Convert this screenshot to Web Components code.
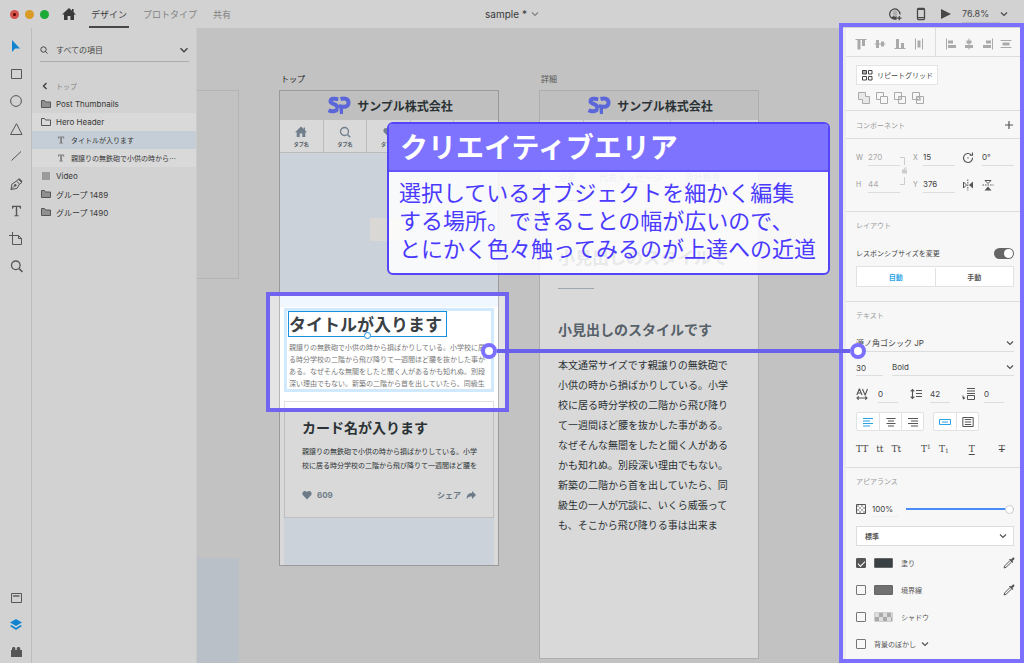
<!DOCTYPE html>
<html lang="ja">
<head>
<meta charset="utf-8">
<meta name="viewport" content="width=device-width, initial-scale=1">
<title>sample</title>
<style>
  body { margin: 0; font-family: Inter, "Noto Sans CJK JP", sans-serif; font-size: 8px; color: #444; background: #e4e4e4; }
</style>
</head>
<body>
<design-app></design-app>
<script>
const BASE = `*{box-sizing:border-box} button,input,select{font:inherit;color:inherit;background:none;border:0;padding:0;margin:0;border-radius:0;outline:0} button{display:inline-flex;align-items:center;justify-content:center} select{appearance:none} p,h2,h3,ul{margin:0;padding:0;font-weight:inherit;list-style:none}`;

function define(name, css, html, setup) {
  const t = document.createElement('template');
  t.innerHTML = `<style>${BASE}${css}</style>${html}`;
  customElements.define(name, class extends HTMLElement {
    constructor() {
      super();
      this.attachShadow({ mode: 'open' }).append(t.content.cloneNode(true));
    }
    connectedCallback() { if (setup) setup(this, this.shadowRoot); }
  });
}

/* Icon set: width, height, markup. Strokes and fills follow the text colour. */
const S = 'fill="none" stroke="currentColor"';
const F = 'fill="currentColor"';
const ICONS = {
  home: [14, 12, `<path ${F} d="M7 0 0 6.6h2V12h3.6V8h2.8v4H12V6.6h2L11.6 4.3V1H10v1.8z"/>`],
  cursor: [16, 16, `<path ${F} d="M4 2v12l3.2-3.6H12z"/>`],
  rect: [16, 16, `<path ${S} d="M3.500 3.500h10v9h-10z"/>`],
  circle: [16, 16, `<circle ${S} cx="8" cy="8" r="5.400"/>`],
  triangle: [16, 16, `<path ${S} d="M8.500 2.700 14 13.500H2.500z"/>`],
  line: [16, 16, `<path ${S} d="m3.500 12.500 9.500-9"/>`],
  pen: [16, 16, `<path ${S} d="M3 13.500 4 8l4.500-2.800L11.500 8 9 12.400zm0 0 4-4M8.500 5.200l1.800-2L13.800 6.500l-2.300 1.700"/><path ${F} d="m10 3 1.300-.7 3.200 3-1 1.200z"/><circle ${F} cx="7.300" cy="9.200" r="1.200"/>`],
  text: [16, 16, `<path ${F} d="M4 2.800h9v3h-.9c-.2-1.400-.6-1.900-1.800-1.900H9.200v7.500c0 .8.400 1 1.600 1.100v.7H6.200v-.7c1.200-.1 1.600-.3 1.600-1.100V3.900H6.700c-1.200 0-1.600.5-1.800 1.900H4z"/>`],
  artboard: [16, 16, `<path ${S} d="M4.500 1v12.500h9V7.500l-3-3H1M10.500 4.500v3h3"/>`],
  search: [16, 16, `<circle ${S} stroke-width="1.300" cx="7.800" cy="7.300" r="4.300"/><path ${S} stroke-width="1.600" d="m11 10.500 3.400 3.400"/>`],
  doc: [16, 16, `<path ${S} d="M3.500 3.500h10v9h-10z"/><path ${S} stroke-width="1.400" d="M5 6h6.500"/>`],
  layers: [16, 16, `<path ${F} d="m8 2 6 3.400-6 3.600-6-3.600zM3.500 8 8 10.800 12.500 8 14 9l-6 4-6-4z"/>`],
  plugin: [16, 16, `<path ${F} d="M3 6h1V4l1-1h1.500l.8 1v2h1.400V4l1-1h1.500l1 1v2H14v7H3z"/>`],
  user: [14, 14, `<path fill="none" stroke="currentColor" stroke-width="1.300" d="M3.600 11.300A5.200 5.200 0 1 1 12 7.500"/><path ${F} d="M4.300 12.200 2.800 10.800C4 10 5.300 9.700 5.600 9 5 8.300 4.600 7.400 4.600 6.200 4.600 4.400 5.500 3.300 7 3.300s2.400 1.100 2.400 2.900c0 1.200-.4 2.100-1 2.800l.3.600.3 2.700c-1.500.8-3.300.7-4.700-.1z" opacity=".25"/><path ${F} d="M3 10.800c.8-1 2-1.100 2.500-1.700l1.500.8 1.500-.8.200 3.300c-2 .7-4.200.200-5.700-1.600z"/><path ${S} stroke-width="1.200" d="M11.300 8.900v4.400M9.100 11.100h4.400"/>`],
  phone: [10, 14, `<rect ${S} stroke-width="1.300" x="1.500" y="1.500" width="7" height="11" rx="1"/><path ${S} d="M1.500 2.500h7M1.500 10.500h7"/>`],
  play: [12, 12, `<path ${F} d="m1 1 10 5-10 5z"/>`],
  chevron: [8, 6, `<path ${S} stroke-width="1.200" d="m1 1.500 3 3 3-3"/>`],
  chevronBold: [10, 8, `<path ${S} stroke-width="1.500" d="m1.500 2.300 3.500 3.400 3.500-3.400"/>`],
  back: [8, 8, `<path ${S} stroke-width="1.300" d="m5.500 1-3 3 3 3"/>`],
  folder: [10, 8, `<path fill="#aaa" stroke="#666" d="M.5 7.500v-7h3l1 1.500h5v5.500z"/>`],
  folderOpen: [10, 8, `<path fill="#fff" stroke="#666" d="M.5 7.500v-7h3l1 1.500h5v5.500z"/>`],
  layerText: [8, 8, `<path fill="#999" d="M1 .5h6.200v2.300h-.8L6 1.600H5v4.900l1 .2v.8H2.200v-.8l1-.2V1.600h-1L1.800 2.800H1z"/>`],
  layerVideo: [10, 8, `<path fill="#b5b5b5" d="M1 0h8v8H1z"/>`],
  alTop: [12, 12, `<path ${S} d="M.5 1.500h11"/><path ${F} d="M2.500 2h3v9.500h-3zM7 2h3v6H7z"/>`],
  alMid: [12, 12, `<path ${S} d="M.5 6h11"/><path ${F} d="M2 2h3v8H2zM7 3.500h3v5H7z"/>`],
  alBot: [12, 12, `<path ${S} d="M.5 10.500h11"/><path ${F} d="M2 1h3v9.500H2zM7 5h3v5.500H7z"/>`],
  disH: [12, 12, `<path ${S} d="M2.500.5v11M9.500.5v11"/><path ${F} d="M4.500 2.500h3v7h-3z"/>`],
  alLeft: [12, 12, `<path ${S} d="M1.500.5v11"/><path ${F} d="M3 2.500h5v3H3zM3 7h8v3H3z"/>`],
  alCen: [12, 12, `<path ${S} d="M6 .5v11"/><path ${F} d="M3.500 2.500h5v3h-5zM2 7h8v3H2z"/>`],
  alRight: [12, 12, `<path ${S} d="M10.500.5v11"/><path ${F} d="M4 2.500h5v3H4zM1 7h8v3H1z"/>`],
  disV: [12, 12, `<path ${S} d="M.5 2.500h11M.5 9.500h11"/><path ${F} d="M2.500 4.500h7v3h-7z"/>`],
  repeat: [12, 12, `<path fill="#aaa" d="M1 1h4.500v4H1z"/><path ${S} d="M1.500 1.500h4v3.500h-4zM7.500 1.500h3.500v3.500H7.500zM1.500 7.500h4V11h-4zM7.500 7.500H11V11H7.500z"/>`],
  boolAdd: [12, 12, `<path fill="#e8e8e8" stroke="currentColor" d="M.5.5h7v4h4v7h-7v-4h-4z"/>`],
  boolSub: [12, 12, `<path ${S} d="M4.500 7.500h-4v-7h7v4"/><path ${S} d="M4.500 4.500h7v7h-7z"/>`],
  boolInt: [12, 12, `<path fill="#ddd" d="M4.500 4.500h3v3h-3z"/><path ${S} d="M.5.5h7v7h-7zM4.500 4.500h7v7h-7z"/>`],
  boolExc: [12, 12, `<path ${S} d="M.5.5h7v7h-7zM4.500 4.500h7v7h-7z"/><path ${S} d="M5.500 5.500h3v3h-3z" opacity=".6"/>`],
  plus: [10, 10, `<path ${S} stroke-width="1.200" d="M5 1v8M1 5h8"/>`],
  link: [8, 28, `<path ${S} d="M0 .5h4.500V8M0 27.500h4.500V20"/><path ${F} d="M2 12.500h5v4H2z"/><path ${S} d="M4.500 12.500V11H6.500"/>`],
  rotate: [12, 12, `<path ${S} stroke-width="1.100" d="M9.200 2.800a4.500 4.500 0 1 0 1.300 3M7.800 3.200h2.700V.5"/><circle ${F} cx="6" cy="6" r=".7"/>`],
  flipH: [12, 12, `<path ${S} d="M1.500 3v6l3-3z"/><path ${F} d="M11 2.500v7L7 6z"/><path ${S} stroke-dasharray="1.500 1" d="M5.800.5v11"/>`],
  flipV: [12, 12, `<path ${S} d="M3 1.500h6L6 4.500z"/><path ${F} d="M2.500 11.500h7L6 7.500z"/><path ${S} stroke-dasharray="1.500 1" d="M.5 6h11"/>`],
  kern: [12, 12, `<path ${S} stroke-width="1.100" d="m.8 7 2.500-6h.3L6 7M1.700 5h3.500M6.500 1 9 7h.2l2.300-6M1 10h10M2.700 8.300 1 10l1.700 1.700M9.300 8.300 11 10l-1.700 1.700"/>`],
  leading: [12, 12, `<path ${S} stroke-width="1.100" d="M2.500 1.500v9M.7 3.300l1.800-1.800 1.800 1.800M.7 8.700l1.800 1.800 1.800-1.800"/><path ${S} d="M6 2.500h6M6 5.500h6M6 8.500h6"/>`],
  para: [14, 12, `<path ${S} d="M5 .5h8M5 3h8M5 5.500h8M5.500 7.500h7v4h-7zM1 7.500v3"/><path ${F} d="M1 8.500 3.500 10 1 11.800z"/>`],
  txL: [10, 10, `<path ${S} stroke-width="1.200" d="M0 1.500h10M0 4h7M0 6.500h10M0 9h7"/>`],
  txC: [10, 10, `<path ${S} stroke-width="1.200" d="M.5 1.500h9M2 4h6M.5 6.500h9M2 9h6"/>`],
  txR: [10, 10, `<path ${S} stroke-width="1.200" d="M0 1.500h10M3 4h7M0 6.500h10M3 9h7"/>`],
  point: [12, 10, `<path ${S} d="M.5 2.500h11v5H.5zM3 5h6"/>`],
  area: [12, 10, `<path ${S} d="M.8.500h10.400v9H.8zM2.800 2.500h6.400M2.800 5h6.400M2.800 7.500h6.400"/>`],
  opacity: [10, 10, `<path fill="#b5b5b5" d="M1 1h2v2H1zM5 1h2v2H5zM3 3h2v2H3zM7 3h2v2H7zM1 5h2v2H1zM5 5h2v2H5zM3 7h2v2H3zM7 7h2v2H7z"/><path ${S} d="M.5.500h9v9h-9z"/>`],
  dropper: [12, 12, `<path ${S} d="M7 3.500 1.800 8.800l-.8 2.200 2.200-.8L8.500 5"/><path ${F} d="M6 2.600 7 1.800l.9.800L9.500.9c1.200-1 2.600.4 1.600 1.600L9.400 4.100l.9 1-.9.900z"/>`],
  house: [12, 12, `<path ${F} d="M6 .5 0 6.300h1.700V11h3V7.500h2.600V11h3V6.300H12L10 4.300V1.500H8.700V3z"/>`],
  find: [12, 12, `<circle ${S} stroke-width="1.300" cx="5.500" cy="5.500" r="4"/><path ${S} stroke-width="1.500" d="m8.500 8.500 2.700 2.700"/>`],
  heart: [10, 10, `<path ${F} d="M5 9.500.8 5C-.9 2.800 2.500-.7 5 2 7.500-.7 10.900 2.800 9.200 5z"/>`],
  person: [10, 10, `<circle ${F} cx="5" cy="3" r="2.400"/><path ${F} d="M.8 9.500C.8 5 9.200 5 9.200 9.500z"/>`],
  share: [10, 10, `<path ${F} d="M6 1v2C2.500 3 .5 5 .8 9.200 2 7 3.500 6.500 6 6.600V9l4-4z"/>`],
  logo: [24, 20, `<g fill="none" stroke="#6b78ff" stroke-width="4"><path d="M11.500 3.500C8 2 3.500 2.400 3.500 5.600c0 2.600 7 2 7 6.100 0 3.600-5 4.500-9 2.600"/><path d="M13.500 3c4-1 8-.6 8 3.600 0 4-3.500 4.500-7.500 4v7.500"/></g><path stroke="#e0e0e0" d="m12.200 0-.6 8M12 12l.5 8"/>`]
};
define('ui-icon', ':host{display:inline-flex;flex:none} svg{display:block}', '<span></span>', (el, root) => {
  const icon = ICONS[el.getAttribute('name')];
  if (!icon) return;
  const [w, h, body] = icon;
  root.querySelector('span').innerHTML = `<svg width="${w}" height="${h}" viewBox="0 0 ${w} ${h}" aria-hidden="true">${body}</svg>`;
});

define('title-bar', `
:host{display:grid;grid-template-columns:1fr auto 1fr;align-items:stretch;height:28px;background:#f7f7f7;font-size:9px}
div{display:flex;align-items:center}
.dots{gap:6px;padding:0 13px 0 10px}
.dots button{width:9px;height:9px;border-radius:50%}
.r{background:#f8615a}.y{background:#ffb72d}.g{background:#20c840}
.r::after{content:"";width:3px;height:3px;border-radius:50%;background:#600}
nav{display:flex;align-self:stretch;margin-left:13px;gap:12px}
nav a{display:flex;align-items:center;padding:0 2px;color:#999;text-decoration:none}
nav a.on{color:#444;box-shadow:inset 0 -2px #555}
h1{display:flex;align-items:center;gap:4px;margin:0;font-size:10px;font-weight:400}
h1 ui-icon{color:#999}
.right{justify-content:flex-end;gap:14px;padding-right:16px;color:#555}
.right label{display:flex;align-items:center;margin-left:-4px}
select{width:38px;border-bottom:1px solid #ddd;height:17px}`,
`<div><div class="dots"><button class="r" aria-label="閉じる"></button><button class="y" aria-label="最小化"></button><button class="g" aria-label="拡大"></button></div>
<button aria-label="ホーム"><ui-icon name="home"></ui-icon></button>
<nav><a class="on" href="#design">デザイン</a><a href="#prototype">プロトタイプ</a><a href="#share">共有</a></nav></div>
<h1>sample * <ui-icon name="chevron"></ui-icon></h1>
<div class="right"><button aria-label="招待"><ui-icon name="user"></ui-icon></button><button aria-label="デバイスプレビュー"><ui-icon name="phone"></ui-icon></button><button aria-label="プレビュー"><ui-icon name="play"></ui-icon></button>
<label><select aria-label="ズーム"><option>76.8%</option><option>100%</option></select><ui-icon name="chevron"></ui-icon></label></div>`);

define('tool-rail', `
:host{display:flex;flex-direction:column;justify-content:space-between;width:32px;padding:10px 7px 3px;background:#f7f7f7;border-right:1px solid #ddd;color:#666}
div{display:flex;flex-direction:column;gap:11px}
.tools{height:236px;gap:0;justify-content:space-between}
.on{color:#159cf5}`,
`<div class="tools" role="toolbar" aria-label="ツール">${[['cursor','選択'],['rect','長方形'],['circle','楕円'],['triangle','多角形'],['line','線'],['pen','ペン'],['text','テキスト'],['artboard','アートボード'],['search','ズーム']].map(([n,l],i)=>`<button aria-label="${l}" class="${i?'':'on'}"><ui-icon name="${n}"></ui-icon></button>`).join('')}</div>
<div><button aria-label="ライブラリ"><ui-icon name="doc"></ui-icon></button><button class="on" aria-label="レイヤー"><ui-icon name="layers"></ui-icon></button><button aria-label="プラグイン"><ui-icon name="plugin"></ui-icon></button></div>`);

define('layer-row', `
:host{display:flex;align-items:center;gap:5px;height:18px;padding:0 18px 0 9px;white-space:nowrap;color:#444}
:host([open]){background:#fff}
:host([child]){padding-left:25px;gap:6px;font-family:"Noto Sans CJK JP",sans-serif;font-size:7px;background:#fff}
:host([selected]){background:#e8f3fc}`,
`<ui-icon></ui-icon><slot></slot>`, (el, root) => {
  const old = root.querySelector('ui-icon');
  const icon = document.createElement('ui-icon');
  icon.setAttribute('name', el.getAttribute('icon'));
  old.replaceWith(icon);
});

define('layers-panel', `
:host{display:block;width:165px;background:#f7f7f7;border-right:1px solid #eee}
.filter{display:flex;align-items:center;gap:8px;height:24px;margin:10px 7px 14px 8px;border-bottom:1px solid #ccc;color:#555}
.filter select{flex:1;min-width:0;height:22px;font-size:8px}
.small{width:8px;height:8px}
.up{display:flex;gap:7px;height:19px;padding-left:9px;color:#999;font-size:7px}
.up ui-icon{color:#444}`,
`<label class="filter"><svg class="small" viewBox="0 0 8 8" aria-hidden="true"><circle cx="3.500" cy="3.500" r="2.700" fill="none" stroke="currentColor"/><path d="m5.500 5.500 2 2" stroke="currentColor"/></svg><select aria-label="フィルター"><option>すべての項目</option><option>テキスト</option></select><ui-icon name="chevronBold"></ui-icon></label>
<button class="up"><ui-icon name="back"></ui-icon>トップ</button>
<layer-row icon="folder">Post Thumbnails</layer-row>
<layer-row icon="folderOpen" open>Hero Header</layer-row>
<layer-row icon="layerText" child selected>タイトルが入ります</layer-row>
<layer-row icon="layerText" child>親譲りの無鉄砲で小供の時から⋯</layer-row>
<layer-row icon="layerVideo">Video</layer-row>
<layer-row icon="folder">グループ 1489</layer-row>
<layer-row icon="folder">グループ 1490</layer-row>`);

define('site-header', `
:host{display:block;background:#fff;font-family:"Noto Sans CJK JP",sans-serif}
.brand{display:flex;align-items:center;justify-content:center;gap:6px;height:29px;padding-left:2px;background:#e1e1e1;color:#333b40;font-size:12px;font-weight:700}
.tabs{display:grid;grid-template-columns:repeat(5,1fr);height:33px;border-bottom:1px solid #ddd}
.tabs button{flex-direction:column;gap:2px;padding-top:2px;font-size:5px;line-height:8px;font-weight:700;color:#66727c;border-right:1px solid #ddd}
.tabs ui-icon{color:#8595a5;height:12px;align-items:center}
.tabs button:last-child{border:0}`,
`<div class="brand"><ui-icon name="logo"></ui-icon>サンプル株式会社</div>
<div class="tabs">${['house','find','heart','person','heart'].map(n=>`<button><ui-icon name="${n}"></ui-icon>タブ名</button>`).join('')}</div>`);

define('art-board', `
:host{display:block;width:220px;font-family:"Noto Sans CJK JP",sans-serif}
h2{height:23px;padding-left:2px;line-height:24px;font-size:8px;font-weight:400;color:#666}
:host([active]) h2{color:#222}
.board{height:calc(100% - 23px);border:1px solid #ccc;background:#fff;overflow:hidden}
:host([active]) .board{border-color:#b5b5b5}`,
`<h2></h2><div class="board"><slot></slot></div>`, (el, root) => {
  root.querySelector('h2').textContent = el.getAttribute('label');
});

define('post-card', `
:host{display:block;margin:0 4px;height:117px;padding:11px 17px 0;background:#fff;border:1px solid #e0e0e0;color:#333b40}
h3{font-size:14px;line-height:28px;font-weight:700}
p{font-size:7px;line-height:14px;margin-top:3px;white-space:nowrap}
footer{display:flex;justify-content:space-between;margin-top:17px;color:#8190a0;font-weight:700}
button{gap:5px}
.share{font-size:8px}
.like{font-size:8px;font-family:Inter,sans-serif}`,
`<h3>カード名が入ります</h3><p>親譲りの無鉄砲で小供の時から損ばかりしている。小学<br>校に居る時分学校の二階から飛び降りて一週間ほど腰を</p>
<footer><button class="like"><ui-icon name="heart"></ui-icon>609</button><button class="share">シェア<ui-icon name="share"></ui-icon></button></footer>`);

define('page-top', `
:host{display:flex;flex-direction:column;height:100%}
.hero{height:154px;padding:65px 0 0 90px;background:#f0f7ff}
.hero i{display:block;width:38px;height:23px;background:#fffefb}
.sel{position:relative;margin:1px 4px 9px;height:84px;border:3px solid #d0e9fd;background:#fff;white-space:nowrap;overflow:hidden;padding-left:1px}
h3{display:inline-block;width:159px;height:26px;border:1px solid #1590e0;font-size:17px;line-height:24px;font-weight:700;color:#3a4145}
p{padding-left:1px;font-size:7px;line-height:12px;color:#777;margin-top:4px}
i.h{position:absolute;left:77px;top:21px;width:7px;height:7px;border-radius:50%;border:1px solid #1590e0;background:#fff}
.rest{flex:1;margin:0 4px;background:#f0f7ff}`,
`<site-header></site-header><div class="hero"><i></i></div>
<div class="sel"><h3>タイトルが入ります</h3><i class="h"></i><p>親譲りの無鉄砲で小供の時から損ばかりしている。小学校に居<br>る時分学校の二階から飛び降りて一週間ほど腰を抜かした事が<br>ある。なぜそんな無闇をしたと聞く人があるかも知れぬ。別段<br>深い理由でもない。新築の二階から首を出していたら、同級生</p></div>
<post-card></post-card><div class="rest"></div>`);

define('page-detail', `
:host{display:block}
nav{display:flex;gap:23px;padding:16px 0 0 18px;font-size:9px;line-height:18px;white-space:nowrap}
nav a{color:#9ab0c8;text-decoration:none}
nav a:first-child{border-bottom:1px solid #9ab0c8;height:32px}
h2{margin:43px 18px 0;font-size:17px;line-height:26px;font-weight:700;color:#66727c;white-space:nowrap}
hr{width:36px;height:1px;margin:18px 18px 0;border:0;background:#b8c6d4}
h3{margin:29px 18px 0;font-size:14px;line-height:22px;font-weight:700;color:#66727c}
p{margin:15px 18px 0;font-size:10px;line-height:20px;color:#333b40;white-space:nowrap}`,
`<site-header></site-header>
<nav><a href="#history">沿革</a><a href="#message">代表メッセージ</a><a href="#company">会社概要</a></nav>
<h2>小見出しのスタイルで</h2><hr><h3>小見出しのスタイルです</h3>
<p>本文通常サイズです親譲りの無鉄砲で<br>小供の時から損ばかりしている。小学<br>校に居る時分学校の二階から飛び降り<br>て一週間ほど腰を抜かした事がある。<br>なぜそんな無闇をしたと聞く人がある<br>かも知れぬ。別段深い理由でもない。<br>新築の二階から首を出していたら、同<br>級生の一人が冗談に、いくら威張って<br>も、そこから飛び降りる事は出来ま</p>`);

define('design-canvas', `
:host{display:block;position:relative;overflow:hidden;background:#e4e4e4}
/* Artboards keep the place they have on the free canvas. */
art-board,i{position:absolute}
.top{left:82px;top:39px;height:499px}
.detail{left:342px;top:39px;height:592px}
.edge{left:0;top:62px;width:42px;height:189px;border:1px solid #d4d4d4;border-left:0}
.blue{left:0;top:530px;width:42px;bottom:0;background:#dae2ea}`,
`<i class="edge"></i><i class="blue"></i>
<art-board class="top" label="トップ" active><page-top></page-top></art-board>
<art-board class="detail" label="詳細"><page-detail></page-detail></art-board>`);

define('panel-section', `
:host{display:block;padding:0 10px;border-bottom:1px solid #ddd}
h2{height:27px;line-height:27px;font-size:7px;font-weight:400;color:#999}
h2:empty{display:none}`,
`<h2></h2><slot></slot>`, (el, root) => {
  root.querySelector('h2').textContent = el.getAttribute('heading') || '';
});

define('paint-row', `
:host{display:flex;align-items:center;justify-content:space-between;height:27px;font-size:7px;color:#555}
label{display:flex;align-items:center}
input{appearance:none;display:grid;place-items:center;width:10px;height:10px;margin-right:8px;border:1px solid #777;border-radius:1px}
input:checked{background:#555;border-color:#555}
input:checked::after{content:"";width:6px;height:3px;border:solid #fff;border-width:0 0 1px 1px;rotate:-45deg}
.sw{width:19px;height:10px;margin:0 8px 0 0;border:1px solid #666;border-radius:1px}
:host([swatch=dark]) .sw{background:#3a4145}
:host([swatch=grey]) .sw{background:#707070}
:host([swatch=check]) .sw{border-color:#ccc;background:repeating-conic-gradient(#aaa 0 25%,#ddd 0 50%) 0 0/8px 8px}
:host(:not([swatch])) .sw{display:none}
:host(:not([pick])) button{display:none}
button{margin-right:-1px}`,
`<label><input type="checkbox"><span class="sw"></span><slot></slot></label><button aria-label="カラーピッカー"><ui-icon name="dropper"></ui-icon></button>`, (el, root) => {
  root.querySelector('input').checked = el.hasAttribute('checked');
});

define('property-inspector', `
:host{display:block;position:relative;z-index:20;width:181px;border-left:3px solid #eee;background:#f7f7f7;color:#555}
.frame{position:absolute;inset:-5px 0 0 -7px;border:4px solid #7b70ff;pointer-events:none}
.align{display:grid;grid-template-columns:89px 1fr;height:29px;border-bottom:1px solid #ddd;color:#aaa}
.align div{display:flex;align-items:center;justify-content:space-between;padding:3px 10px 0 9px}
.align div+div{border-left:1px solid #ddd;padding:3px 12px 0 9px}
.repeat{gap:4px;width:82px;height:20px;margin-top:8px;border:1px solid #e4e4e4;background:#fff;font-size:7px;color:#444}
.bool{display:flex;gap:6px;padding:7px 0 6px 2px;color:#aaa}
.comp{display:flex;justify-content:space-between;align-items:center;height:27px;font-size:7px;color:#999}
.comp button{color:#555}
.xy{display:grid;grid-template-columns:12px 32px 13px 10px 32px 7px 20px 32px;grid-auto-rows:27px;align-items:center;padding:5px 0 13px}
.xy label{font-size:7px;color:#999}
.xy input[type=text]{height:17px}
input[type=text]{width:100%;height:16px;border-bottom:1px solid #ddd;color:#444}
input.off[type=text]{color:#aaa}
.xy .link{grid-area:1/3/3/4;color:#ccc;justify-self:start}
.xy .x{grid-column:4}.xy .ic{grid-column:7}
.xy button{justify-content:start}
.sub{display:flex;justify-content:space-between;align-items:center;height:28px;font-size:7px;color:#444}
.toggle{appearance:none;width:20px;height:11px;border-radius:6px;background:#666;display:flex;justify-content:flex-end;padding:1px}
.toggle::after{content:"";width:9px;height:9px;border-radius:50%;background:#fff}
.seg{display:flex;border:1px solid #e2e2e2;background:#fff}
.seg button{flex:1;height:18px}
.seg button+button{border-left:1px solid #e2e2e2}
.auto{font-size:7px;font-weight:700;margin-bottom:14px;margin-top:-1px;height:21px;align-items:center}
.blue{color:#29a3e6}
.pick{display:flex;align-items:center;border-bottom:1px solid #ddd}
.pick select{flex:1;min-width:0;height:16px;color:#444}
.font{margin-top:6px}
.row{display:flex;align-items:center}
.weight{height:24px;gap:9px;align-items:flex-end}
.weight input{width:27px}.weight .pick{flex:1}
.gaps{height:27px;align-items:flex-end;justify-content:space-between;padding-right:10px}
.gaps label{display:flex;gap:10px;align-items:center}
.gaps label+label{gap:8px}
.gaps input[type=text]{width:20px;height:18px}
.aligns{gap:9px;margin-top:9px}
.aligns .seg{height:19px;border-radius:2px}
.aligns button{width:22px;flex:none;height:17px}
.case{height:36px;padding-bottom:1px;align-items:center;font-family:"DejaVu Serif","Liberation Serif",serif;font-size:9px;color:#444}
.case sup,.case sub{font-size:6px;line-height:6px}
.case button{align-items:baseline}
.case sup{align-self:flex-start}.case sub{align-self:flex-end}
.case .u{text-decoration:underline;text-underline-offset:2px}
.case .s{margin-left:24px;text-decoration:line-through}
.g8{margin-left:8px}.g18{margin-left:20px}
.op{height:28px;gap:6px}
.op input[type=text]{width:26px;border-color:#eee}
input[type=range]{appearance:none;flex:1;min-width:0;height:10px;margin-left:2px;background:linear-gradient(#4a8cf5,#4a8cf5) center/100% 2px no-repeat}
input[type=range]::-webkit-slider-thumb{appearance:none;width:9px;height:9px;border-radius:50%;background:#fff;border:1px solid #ccc}
.blend{display:flex;align-items:center;height:20px;margin:3px 0;padding:0 6px 0 8px;border:1px solid #ddd;background:#fff;font-size:7px;font-weight:700}
.blend select{flex:1;height:18px}
.last{border:0}
paint-row ui-icon{margin-left:5px}`,
`<div class="align"><div>${[['alTop','上揃え'],['alMid','中央揃え（垂直方向）'],['alBot','下揃え'],['disH','水平方向に分布']].map(([n,l])=>`<button aria-label="${l}"><ui-icon name="${n}"></ui-icon></button>`).join('')}</div><div>${[['alLeft','左揃え'],['alCen','中央揃え（水平方向）'],['alRight','右揃え'],['disV','垂直方向に分布']].map(([n,l])=>`<button aria-label="${l}"><ui-icon name="${n}"></ui-icon></button>`).join('')}</div></div>
<panel-section><button class="repeat"><ui-icon name="repeat"></ui-icon>リピートグリッド</button>
<div class="bool">${[['boolAdd','合体'],['boolSub','前面オブジェクトで型抜き'],['boolInt','交差'],['boolExc','中マド']].map(([n,l])=>`<button aria-label="${l}"><ui-icon name="${n}"></ui-icon></button>`).join('')}</div></panel-section>
<panel-section><div class="comp">コンポーネント<button aria-label="追加"><ui-icon name="plus"></ui-icon></button></div></panel-section>
<panel-section><div class="xy">
<label for="w">W</label><input id="w" class="off" type="text" value="270"><ui-icon class="link" name="link"></ui-icon><label class="x" for="x">X</label><input id="x" type="text" value="15"><ui-icon class="ic" name="rotate"></ui-icon><input type="text" aria-label="回転" value="0°">
<label for="h">H</label><input id="h" class="off" type="text" value="44"><label class="x" for="y">Y</label><input id="y" type="text" value="376"><button class="ic" aria-label="左右反転"><ui-icon name="flipH"></ui-icon></button><button aria-label="上下反転"><ui-icon name="flipV"></ui-icon></button></div></panel-section>
<panel-section heading="レイアウト"><label class="sub">レスポンシブサイズを変更<input class="toggle" type="checkbox" role="switch" checked></label>
<div class="seg auto"><button class="blue">自動</button><button>手動</button></div></panel-section>
<panel-section heading="テキスト"><label class="pick font"><select aria-label="フォント"><option>源ノ角ゴシック JP</option></select><ui-icon name="chevron"></ui-icon></label>
<div class="row weight"><input type="text" aria-label="文字サイズ" value="30"><label class="pick"><select aria-label="太さ"><option>Bold</option><option>Regular</option></select><ui-icon name="chevron"></ui-icon></label></div>
<div class="row gaps"><label><ui-icon name="kern"></ui-icon><input type="text" aria-label="文字の間隔" value="0"></label><label><ui-icon name="leading"></ui-icon><input type="text" aria-label="行送り" value="42"></label><label><ui-icon name="para"></ui-icon><input type="text" aria-label="段落の間隔" value="0"></label></div>
<div class="row aligns"><div class="seg"><button class="blue" aria-label="左揃え"><ui-icon name="txL"></ui-icon></button><button aria-label="中央揃え"><ui-icon name="txC"></ui-icon></button><button aria-label="右揃え"><ui-icon name="txR"></ui-icon></button></div><div class="seg"><button class="blue" aria-label="ポイントテキスト"><ui-icon name="point"></ui-icon></button><button aria-label="エリア内テキスト"><ui-icon name="area"></ui-icon></button></div></div>
<div class="row case"><button>TT</button><button class="g8">tt</button><button class="g8">Tt</button><button class="g18">T<sup>1</sup></button><button class="g8">T<sub>1</sub></button><button class="u g18">T</button><button class="s">T</button></div></panel-section>
<panel-section class="last" heading="アピアランス"><div class="row op"><ui-icon name="opacity"></ui-icon><input type="text" aria-label="不透明度" value="100%"><input type="range" aria-label="不透明度スライダー" value="100"></div>
<label class="blend"><select aria-label="描画モード"><option>標準</option><option>乗算</option></select><ui-icon name="chevron"></ui-icon></label>
<paint-row swatch="dark" pick checked>塗り</paint-row><paint-row swatch="grey" pick>境界線</paint-row><paint-row swatch="check">シャドウ</paint-row><paint-row>背景のぼかし<ui-icon name="chevron"></ui-icon></paint-row></panel-section>
<div class="frame"></div>`);

define('spot-light', `
/* The wide shadow dims everything outside the lit frame. */
:host{display:block;border:4px solid #7064f0;box-shadow:0 0 0 200vmax rgba(0,0,0,.15)}`, '');

define('link-line', `
:host{display:flex;align-items:center;justify-content:space-between;height:16px}
i{width:16px;height:16px;border:4px solid #7b70ff;border-radius:50%;background:#fff}
b{flex:1;height:4px;background:#6b60ec}`, '<i></i><b></b><i></i>');

define('callout-note', `
:host{display:block;border:2px solid #5346f8;border-radius:6px;overflow:hidden;background:rgba(255,255,255,.86);font-family:"Noto Sans CJK JP",sans-serif;color:#4a3aff}
header{padding:0 11px;height:48px;background:rgba(122,110,255,.97);border-bottom:2px solid #6255fb;color:#fff;font-size:28px;line-height:45px;font-weight:700}
div{padding:5px 10px 12px;font-size:22px;line-height:28px;white-space:nowrap}`,
`<header><slot name="title"></slot></header><div><slot></slot></div>`);

define('design-app', `
:host{display:grid;grid-template-rows:auto 1fr;position:relative;min-height:100vh;overflow:hidden}
main{display:grid;grid-template-columns:auto auto 1fr auto}
spot-light,link-line,callout-note{position:absolute}
spot-light{left:266px;top:292px;width:243px;height:120px;z-index:10}
link-line{left:481px;right:158px;top:343px;z-index:30}
callout-note{left:387px;top:122px;width:443px;z-index:30}`,
`<title-bar></title-bar>
<main><tool-rail></tool-rail><layers-panel></layers-panel><design-canvas></design-canvas><property-inspector></property-inspector></main>
<spot-light></spot-light><link-line></link-line>
<callout-note><span slot="title">クリエイティブエリア</span>選択しているオブジェクトを細かく編集<br>する場所。できることの幅が広いので、<br>とにかく色々触ってみるのが上達への近道</callout-note>`);
</script>
</body>
</html>
